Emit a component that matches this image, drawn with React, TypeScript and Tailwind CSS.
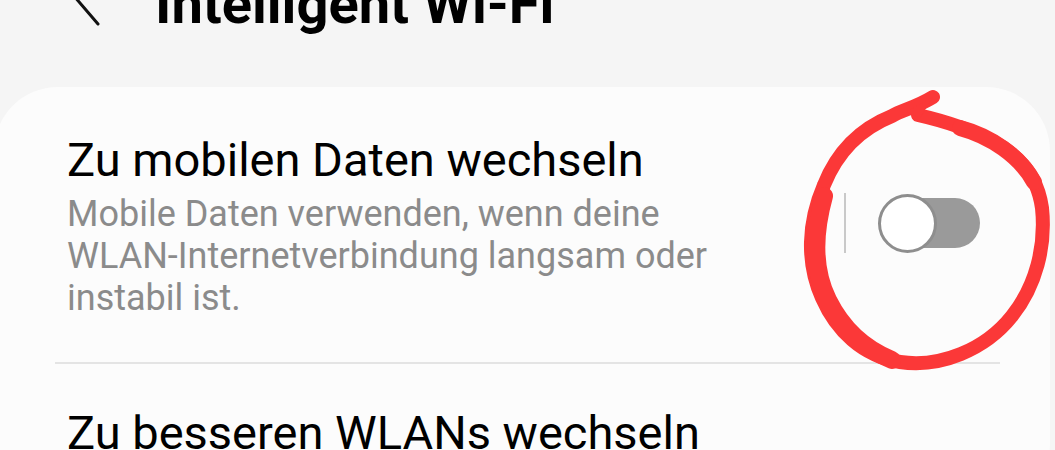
import React from 'react';

const font = { fontFamily: 'Roboto, "Noto Sans", Arial, sans-serif' };

const Toggle: React.FC<{ on?: boolean }> = ({ on = false }) => {
    return (
        <div className="relative w-[102px] h-[60px] flex items-center">
            <div className={`absolute left-[1px] right-0 h-[50px] rounded-full ${on ? 'bg-[#3e91ff]' : 'bg-[#9a9a9a]'}`} />
            <div className="relative w-[59px] h-[59px] rounded-full bg-white border-[3px] border-[#8e8e8e]" />
        </div>
    );
};

// Roter Kreis (Markierung im Screenshot)
const Annotation: React.FC = () => (
    <svg className="absolute inset-0 pointer-events-none" width="1055" height="450" viewBox="0 0 1055 450">
        <path
            d="M933 97 C915 108 902 110 892 116 C862 128 838 150 824 185 C808 222 806 262 822 298 C836 330 862 356 900 362 C940 368 985 350 1012 316 C1036 286 1046 246 1042 208 C1038 178 1020 156 994 142 C968 128 940 120 918 115"
            fill="none"
            stroke="#fb3838"
            strokeWidth="14"
            strokeLinecap="round"
            strokeLinejoin="round"
        />
        <path
            d="M824 196 C814 232 812 268 828 300 C842 328 862 348 892 360"
            fill="none"
            stroke="#fb3838"
            strokeWidth="18"
            strokeLinecap="round"
        />
        <path
            d="M960 128 C990 136 1020 156 1034 182"
            fill="none"
            stroke="#fb3838"
            strokeWidth="16"
            strokeLinecap="round"
        />
        <path d="M933 97 L920 118 L906 112 Z" fill="#fb3838" />
    </svg>
);

const App: React.FC = () => {
    return (
        <div className="relative w-[1055px] h-[450px] overflow-hidden bg-[#f5f5f5]" style={font}>
            {/* Kopfzeile */}
            <div className="h-[87px] overflow-hidden">
                <div className="flex items-end -mt-[40px] h-[76px]">
                    <svg className="ml-[68px] mb-[4px]" width="34" height="70" viewBox="0 0 34 70">
                        <path d="M30 6 L6 34 L30 62" fill="none" stroke="#111" strokeWidth="3" strokeLinecap="round" strokeLinejoin="round" />
                    </svg>
                    <h1 className="ml-[53px] text-[56px] leading-[64px] font-bold text-black">Intelligent Wi-Fi</h1>
                </div>
            </div>

            {/* Karte */}
            <div className="-ml-[6px] mr-[5px] rounded-[64px] bg-[#fcfcfc] h-[420px]">
                <div className="flex items-start pl-[73px] pr-[70px] pt-[45px] pb-[43px]">
                    <div className="flex-1">
                        <div className="text-[47px] leading-[56px] text-black">Zu mobilen Daten wechseln</div>
                        <div className="mt-[5px] text-[36px] leading-[42px] text-[#8b8b8b]">
                            Mobile Daten verwenden, wenn deine
                            <br />
                            WLAN-Internetverbindung langsam oder
                            <br />
                            instabil ist.
                        </div>
                    </div>
                    <div className="flex items-center mt-[61px]">
                        <div className="w-[2px] h-[60px] bg-[#c9c9c9] mr-[32px]" />
                        <Toggle />
                    </div>
                </div>
                <div className="ml-[61px] mr-[50px] h-[2px] bg-[#e4e4e4]" />
                <div className="pl-[73px] pt-[41px]">
                    <div className="text-[47px] leading-[56px] text-black">Zu besseren WLANs wechseln</div>
                </div>
            </div>

            <Annotation />
        </div>
    );
};

export default App;
